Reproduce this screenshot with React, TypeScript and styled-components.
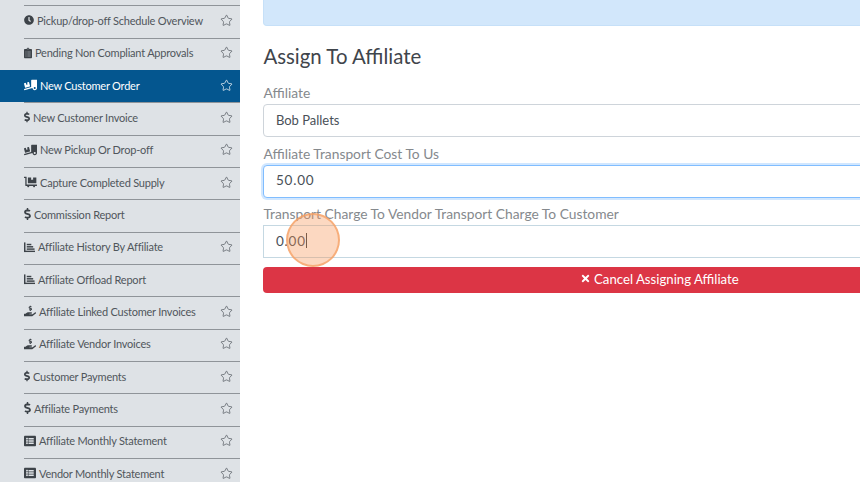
import React from "react";
import styled, { createGlobalStyle } from "styled-components";
import {
  FaClock, FaClipboardList, FaTruckLoading, FaDollarSign, FaDollyFlatbed,
  FaHandHoldingUsd, FaListAlt, FaTimes,
} from "react-icons/fa";
import { Star as StarGlyph } from "lucide-react";

const Global = createGlobalStyle`
  html, body { margin: 0; padding: 0; width: 860px; height: 482px; overflow: hidden; background: #fff; }
  * { box-sizing: border-box; }
  body { font-family: "Lato", "Liberation Sans", sans-serif; }
`;

const Page = styled.div`
  position: relative;
  display: flex;
  width: 860px;
  height: 482px;
  overflow: hidden;
`;

const Sidebar = styled.nav`
  flex: 0 0 240px;
  height: 482px;
  overflow: hidden;
  background: #dee2e6;
  padding-top: 5.2px;
`;

const Row = styled.div<{ $active?: boolean }>`
  height: 32.35px;
  padding-left: ${(p) => (p.$active ? 0 : 24)}px;
  background: ${(p) => (p.$active ? "#04568f" : "transparent")};
  color: ${(p) => (p.$active ? "#fff" : "#50565c")};
`;

const RowInner = styled.div<{ $active?: boolean }>`
  display: flex;
  align-items: center;
  height: 100%;
  padding-left: ${(p) => (p.$active ? 24 : 0)}px;
  padding-right: 7.5px;
  padding-bottom: 3px;
  border-top: 1px solid ${(p) => (p.$active ? "#04568f" : "#8f9499")};
  font-size: 11px;
  letter-spacing: -0.22px;
  white-space: nowrap;
`;

const RowIcon = styled.span<{ $w: number }>`
  display: inline-flex;
  flex: none;
  align-items: center;
  width: ${(p) => p.$w}px;
  height: 12px;
  margin-right: 3px;
  color: #3d4349;
  svg {
    width: 100%;
    height: 100%;
  }
`;

const ActiveRowIcon = styled(RowIcon)`
  color: #fff;
`;

const RowLabel = styled.span`
  flex: 1;
`;

const Star = styled(StarGlyph)`
  flex: none;
  width: 13px;
  height: 13px;
  stroke-width: 1.3;
`;

const Main = styled.main`
  flex: 1;
  min-width: 0;
  overflow: hidden;
  padding-left: 23.4px;
`;

const Content = styled.div`
  width: 793px;
`;

const Alert = styled.div`
  height: 26px;
  background: #d2e7fb;
  border: 1px solid #c6e0f8;
  border-top: 0;
  border-radius: 0 0 4px 4px;
`;

const Title = styled.h2`
  margin: 16px 0 15px;
  font-size: 20.4px;
  line-height: 28px;
  font-weight: 400;
  color: #3f454b;
`;

const Label = styled.label`
  display: block;
  height: 16px;
  line-height: 16px;
  margin-bottom: 3px;
  font-size: 13.8px;
  color: #85898d;
  white-space: nowrap;
`;

const Field = styled.div<{ $focus?: boolean; $tint?: boolean }>`
  display: flex;
  align-items: center;
  height: 33px;
  margin-bottom: 8.5px;
  padding: 0 0 2px 11.5px;
  font-size: 13px;
  color: #495057;
  background: #fff;
  border: 1px solid ${(p) => (p.$focus ? "#80bdff" : p.$tint ? "#c5d8e2" : "#ced4da")};
  border-radius: ${(p) => (p.$tint ? 0 : 4)}px;
  box-shadow: ${(p) => (p.$focus ? "0 0 0 2px rgba(0,123,255,.18)" : "none")};
`;

const NumberValue = styled.span`
  font-size: 13.5px;
  letter-spacing: 0.8px;
`;

const Caret = styled.span`
  display: inline-block;
  width: 1px;
  height: 15px;
  background: #343a40;
`;

const CancelButton = styled.button`
  display: flex;
  align-items: center;
  justify-content: center;
  gap: 4px;
  width: 100%;
  height: 26.5px;
  padding: 0 0 2px;
  border: 0;
  border-radius: 4px;
  background: #dc3545;
  color: #fff;
  font: inherit;
  font-size: 13.2px;
  svg {
    width: 9px;
    height: 11px;
  }
`;

const Spot = styled.div`
  position: absolute;
  left: 286px;
  top: 213px;
  width: 54px;
  height: 54px;
  border-radius: 50%;
  background: rgba(247, 148, 84, 0.36);
  border: 2px solid rgba(245, 160, 100, 0.75);
`;

const ChartIcon = () => (
  <svg viewBox="0 0 12 12" fill="currentColor" aria-hidden="true">
    <rect x="0" y="1" width="1.6" height="10.5" />
    <rect x="0" y="10" width="12" height="1.5" />
    <rect x="3" y="2.5" width="5" height="1.6" />
    <rect x="3" y="5" width="7" height="1.6" />
    <rect x="3" y="7.5" width="8.5" height="1.6" />
  </svg>
);

const items = [
  { icon: <FaClock />, w: 10, label: "Pickup/drop-off Schedule Overview", star: true },
  { icon: <FaClipboardList />, w: 8, label: "Pending Non Compliant Approvals", star: true },
  { icon: <FaTruckLoading />, w: 13, label: "New Customer Order", star: true, active: true },
  { icon: <FaDollarSign />, w: 6, label: "New Customer Invoice", star: true },
  { icon: <FaTruckLoading />, w: 13, label: "New Pickup Or Drop-off", star: true },
  { icon: <FaDollyFlatbed />, w: 13, label: "Capture Completed Supply", star: true },
  { icon: <FaDollarSign />, w: 7, label: "Commission Report", star: false },
  { icon: <ChartIcon />, w: 11, label: "Affiliate History By Affiliate", star: true },
  { icon: <ChartIcon />, w: 11, label: "Affiliate Offload Report", star: false },
  { icon: <FaHandHoldingUsd />, w: 12, label: "Affiliate Linked Customer Invoices", star: true },
  { icon: <FaHandHoldingUsd />, w: 12, label: "Affiliate Vendor Invoices", star: true },
  { icon: <FaDollarSign />, w: 6, label: "Customer Payments", star: true },
  { icon: <FaDollarSign />, w: 7, label: "Affiliate Payments", star: true },
  { icon: <FaListAlt />, w: 12, label: "Affiliate Monthly Statement", star: true },
  { icon: <FaListAlt />, w: 12, label: "Vendor Monthly Statement", star: true },
];

export default function App() {
  return (
    <Page>
      <Global />
      <Sidebar>
        {items.map((it) => {
          const Icon = it.active ? ActiveRowIcon : RowIcon;
          return (
            <Row key={it.label} $active={it.active}>
              <RowInner $active={it.active}>
                <Icon $w={it.w}>{it.icon}</Icon>
                <RowLabel>{it.label}</RowLabel>
                {it.star && <Star />}
              </RowInner>
            </Row>
          );
        })}
      </Sidebar>
      <Main>
        <Content>
          <Alert />
          <Title>Assign To Affiliate</Title>
          <Label>Affiliate</Label>
          <Field>Bob Pallets</Field>
          <Label>Affiliate Transport Cost To Us</Label>
          <Field $focus>
            <NumberValue>50.00</NumberValue>
          </Field>
          <Label>Transport Charge To Vendor Transport Charge To Customer</Label>
          <Field $tint>
            <NumberValue>0.00</NumberValue>
            <Caret />
          </Field>
          <CancelButton>
            <FaTimes /> Cancel Assigning Affiliate
          </CancelButton>
        </Content>
      </Main>
      <Spot />
    </Page>
  );
}
